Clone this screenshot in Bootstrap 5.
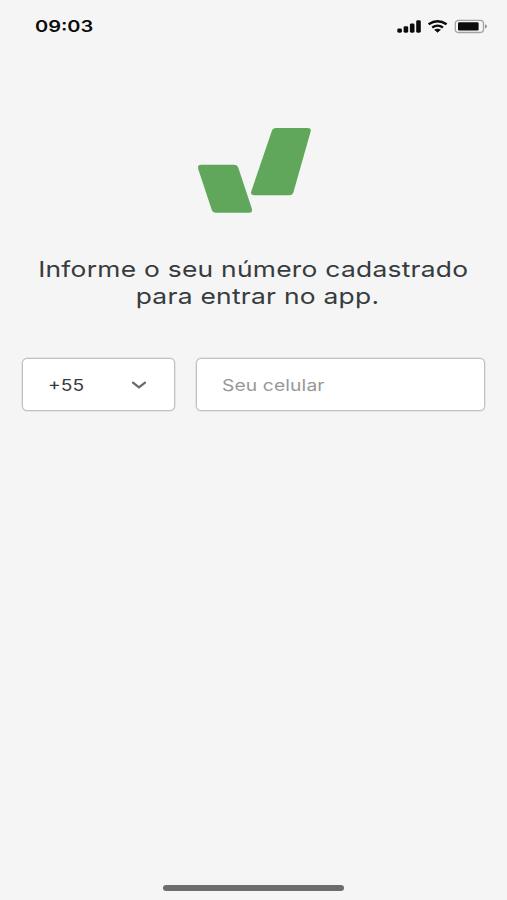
<!DOCTYPE html>
<html lang="pt-BR">
<head>
<meta charset="utf-8">
<meta name="viewport" content="width=device-width, initial-scale=1">
<title>Entrar</title>
<link href="https://cdn.jsdelivr.net/npm/bootstrap@5.3.0/dist/css/bootstrap.min.css" rel="stylesheet">
<style>
body { background: #f5f5f5; font-family: Inter, "Liberation Sans", sans-serif; color: #373c40; }
.screen { height: 900px; }
.wide { display: inline-block; white-space: nowrap; transform: scaleX(1.2); transform-origin: left center; }
.status { height: 53px; padding: 0 18px 0 35px; color: #0b0b0b; }
.clock { font-size: 16px; font-weight: 600; line-height: 53px; transform: scaleX(1.25); }
.brand { padding-top: 74px; padding-left: 1px; }
.headline { margin-top: 42px; font-size: 22px; line-height: 27px; font-weight: 400; letter-spacing: .21px; }
.headline .wide { transform-origin: center; }
.headline .second { margin-left: 7px; }
.fields { gap: 21px; padding: 0 22px; margin-top: 48px; }
.field { height: 53px; background: #fff; border: 1px solid #bfc2c3; box-shadow: 0 0 0 .5px #d4d6d7; border-radius: 5px; padding: 0 25px; font-size: 16px; }
.code { width: 153px; padding-right: 26px; flex: none; }
.hint { color: #949899; letter-spacing: .12px; }
.home-bar { width: 181px; height: 6px; margin-bottom: 9px; background: #6d6d6d; }
</style>
<script src="https://cdn.jsdelivr.net/npm/bootstrap@5.3.0/dist/js/bootstrap.bundle.min.js"></script>
</head>
<body>
<main class="screen d-flex flex-column overflow-hidden">
  <header class="status d-flex justify-content-between align-items-center">
    <span class="wide clock">09:03</span>
    <svg width="92" height="16" viewBox="0 0 92 16" aria-hidden="true">
      <g fill="#0b0b0b">
        <rect x="0.300" y="9.400" width="4.600" height="4.300" rx="1.400"/>
        <rect x="6.600" y="7.200" width="4.600" height="6.500" rx="1.400"/>
        <rect x="12.900" y="4.600" width="4.600" height="9.100" rx="1.400"/>
        <rect x="19.200" y="1.300" width="4.600" height="12.400" rx="1.400"/>
        <path d="M37.700 10.800Q40.500 9.200 43.400 10.800L40.600 13.200Z" stroke="#0b0b0b" stroke-width=".8" stroke-linejoin="round"/>
        <rect x="61" y="3.300" width="20.600" height="8.200" rx="1.300"/>
      </g>
      <g fill="none" stroke="#0b0b0b" stroke-width="2.400">
        <path d="M31.600 5.300Q40.600-.9 49.600 5.300"/>
        <path d="M35.200 8.500Q40.600 4.800 46 8.500"/>
      </g>
      <rect x="58.300" y="1.300" width="28.200" height="12.200" rx="3.200" fill="none" stroke="#a2a2a2" stroke-width="1.300"/>
      <path d="M88 5.200Q92 7.400 88 9.600Z" fill="#8b8b8b"/>
    </svg>
  </header>

  <div class="brand text-center">
    <svg class="d-block mx-auto" width="115" height="87" viewBox="0 0 115 87" role="img" aria-label="Logo" fill="#60a75b">
      <path d="M79 1h31.500q4.300 0 3 4L96.500 65q-1 3.200-4.200 3.200H57.500q-4.500 0-3.200-4L74.800 4Q75.800 1 79 1Z"/>
      <path d="M4.500 37.800H37q3.200 0 4.300 3L54.800 81.500q1.200 4.300-2.800 4.300H19q-3.200 0-4.300-3L1.200 42Q0 37.800 4.500 37.800Z"/>
    </svg>
  </div>

  <h1 class="headline text-center mb-0">
    <span class="wide">Informe o seu número cadastrado</span><br>
    <span class="wide second">para entrar no app.</span>
  </h1>

  <div class="fields d-flex">
    <div class="field code d-flex align-items-center justify-content-between" role="button">
      <span class="wide">+55</span>
      <svg width="18" height="12" viewBox="0 0 18 12" fill="none" stroke="#666a6c" stroke-width="2.300" stroke-linecap="round" stroke-linejoin="round" aria-hidden="true"><path d="M3 3.600 9 8.400 15 3.600"/></svg>
    </div>
    <div class="field flex-grow-1 d-flex align-items-center" role="textbox">
      <span class="wide hint">Seu celular</span>
    </div>
  </div>

  <div class="home-bar rounded-pill mx-auto mt-auto"></div>
</main>
</body>
</html>
